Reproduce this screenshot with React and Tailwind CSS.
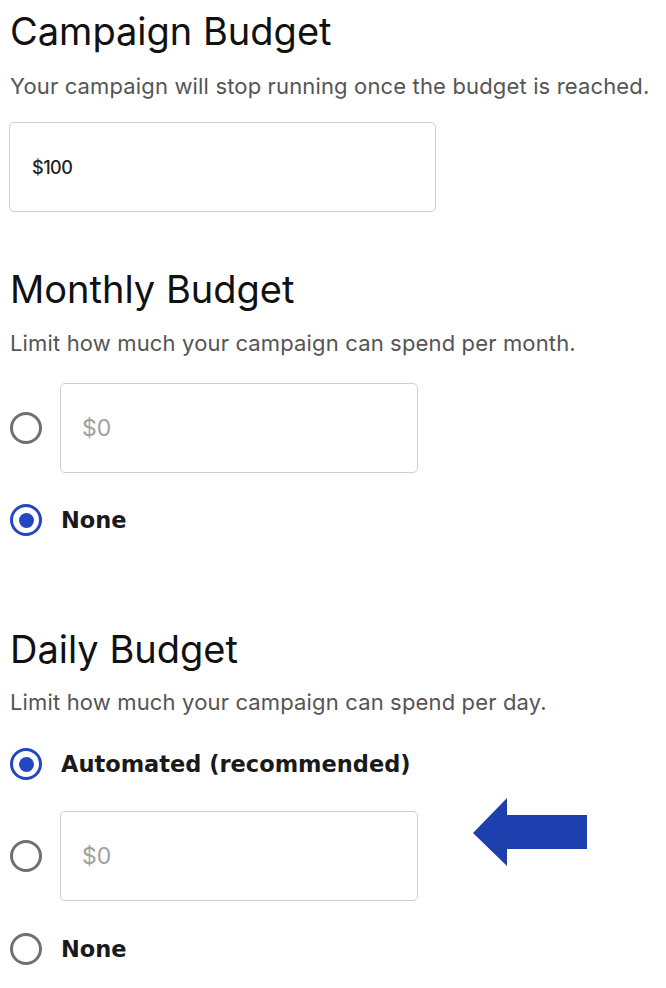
import React from 'react';

const font = { fontFamily: 'Inter, "Noto Sans", sans-serif' };
const boldFont = { fontFamily: '"DejaVu Sans", Inter, sans-serif' };

const Radio = ({ checked }) => (
  <span
    className={`flex h-[32px] w-[32px] shrink-0 items-center justify-center rounded-full border-[3px] ${
      checked ? 'border-[#2347c2]' : 'border-[#707070]'
    }`}
  >
    {checked && <span className="h-[15px] w-[15px] rounded-full bg-[#2347c2]" />}
  </span>
);

const Field = ({ value, placeholder, className = '' }) => (
  <div
    className={`flex h-[90px] items-center rounded-[5px] border border-[#d0d0d0] bg-white ${className}`}
  >
    {value ? (
      <span className="pl-[22px] text-[18px] font-medium tracking-[-0.5px] text-[#222]">{value}</span>
    ) : (
      <span className="pl-[21px] text-[23px] text-[#a0a0a0]">{placeholder}</span>
    )}
  </div>
);

const Option = ({ checked, label }) => (
  <div className="flex items-center gap-[19px] pl-[10px]">
    <Radio checked={checked} />
    <span className="text-[22.5px] font-bold leading-[28px] text-[#1a1a1a]" style={boldFont}>
      {label}
    </span>
  </div>
);

const FieldOption = () => (
  <div className="flex items-center gap-[18px] pl-[10px]">
    <Radio checked={false} />
    <Field placeholder="$0" className="w-[358px]" />
  </div>
);

// big blue pointer next to the daily amount field
const ArrowLeft = () => (
  <svg width="114" height="68" viewBox="0 0 114 68" className="ml-[55px] mt-[-13px]">
    <polygon points="0,35 34,0 34,17 114,17 114,51 34,51 34,68" fill="#1e3fae" />
  </svg>
);

const Title = ({ children, className = '' }) => (
  <h2 className={`px-[10px] text-[38px] leading-[44px] text-[#111] ${className}`}>{children}</h2>
);

const Sub = ({ children, className = '' }) => (
  <p className={`px-[10px] text-[22px] leading-[28px] tracking-[0.15px] text-[#555] ${className}`}>{children}</p>
);

export default function App() {
  return (
    <div className="min-h-screen w-[666px] bg-white pt-[9px]" style={font}>
      <Title>Campaign Budget</Title>
      <Sub className="mt-[19px]">Your campaign will stop running once the budget is reached.</Sub>
      <div className="mt-[22px] px-[9px]">
        <Field value="$100" className="w-[427px]" />
      </div>

      <Title className="mt-[55px]">Monthly Budget</Title>
      <Sub className="mt-[18px]">Limit how much your campaign can spend per month.</Sub>
      <div className="mt-[26px]">
        <FieldOption />
      </div>
      <div className="mt-[31px]">
        <Option checked label="None" />
      </div>

      <Title className="mt-[91px]">Daily Budget</Title>
      <Sub className="mt-[17px]">Limit how much your campaign can spend per day.</Sub>
      <div className="mt-[32px]">
        <Option checked label="Automated (recommended)" />
      </div>
      <div className="mt-[31px] flex items-start">
        <FieldOption />
        <ArrowLeft />
      </div>
      <div className="mt-[32px]">
        <Option checked={false} label="None" />
      </div>
    </div>
  );
}
